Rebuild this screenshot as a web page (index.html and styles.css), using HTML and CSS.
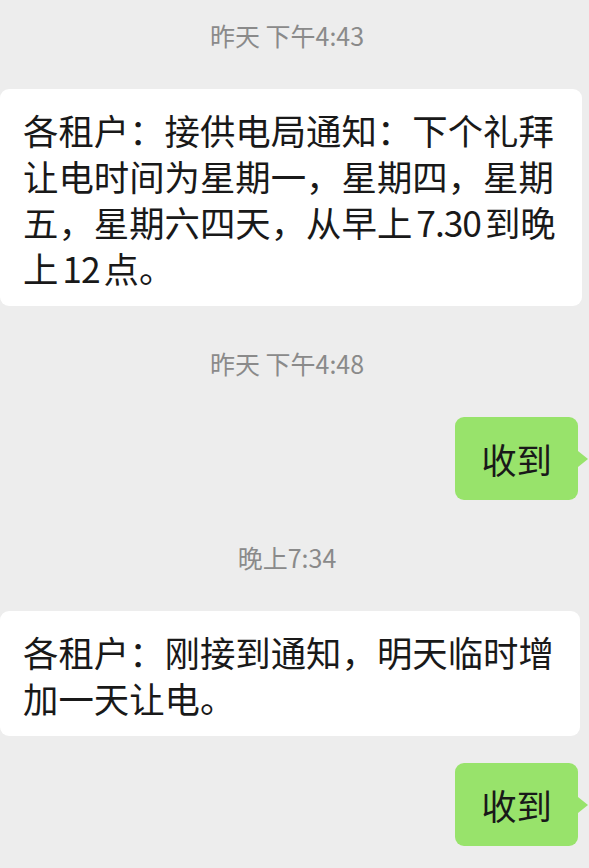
FILE: index.html
```html
<!DOCTYPE html>
<html lang="zh-CN">
<head>
<meta charset="utf-8">
<title>聊天</title>
<link rel="stylesheet" href="styles.css">
</head>
<body>
<div class="chat">
  <div class="time">昨天 下午4:43</div>
  <div class="row left">
    <div class="bubble white">各租户：接供电局通知：下个礼拜<br>让电时间为星期一，星期四，星期<br>五，星期六四天，从早上 <span class="num">7.30</span> 到晚<br>上 <span class="num">12</span> 点。</div>
  </div>
  <div class="time">昨天 下午4:48</div>
  <div class="row right">
    <div class="bubble green">收到</div>
  </div>
  <div class="time">晚上7:34</div>
  <div class="row left">
    <div class="bubble white">各租户：刚接到通知，明天临时增<br>加一天让电。</div>
  </div>
  <div class="row right">
    <div class="bubble green">收到</div>
  </div>
</div>
</body>
</html>
```
FILE: styles.css
```css
html, body {
  margin: 0;
  padding: 0;
  background: #ededed;
}
body {
  width: 589px;
  height: 868px;
  overflow: hidden;
  font-family: "Noto Sans CJK SC", "Noto Sans", sans-serif;
}
.chat {
  display: flex;
  flex-direction: column;
}
.time {
  font-size: 25px;
  line-height: 30px;
  color: #8a8a8a;
  text-align: center;
  padding-right: 15px;
  margin: 42px 0 39px;
}
.time:first-child {
  margin-top: 20px;
}
.row {
  display: flex;
}
.row + .row {
  margin-top: 27px;
}
.row.left {
  justify-content: flex-start;
}
.row.right {
  justify-content: flex-end;
  padding-right: 11px;
}
.bubble {
  font-size: 35.4px;
  line-height: 46px;
  color: #191919;
  white-space: nowrap;
  border-radius: 9px;
  position: relative;
}
.white {
  background: #ffffff;
  padding: 18px 26px 15px 23px;
  word-spacing: -4px;
}
.num {
  letter-spacing: -1px;
}
.green {
  background: #98e36b;
  padding: 19px 26px 18px 26px;
}
.green::after {
  content: "";
  position: absolute;
  right: -10px;
  top: 34px;
  border-left: 10px solid #98e36b;
  border-top: 8px solid transparent;
  border-bottom: 8px solid transparent;
}
```
